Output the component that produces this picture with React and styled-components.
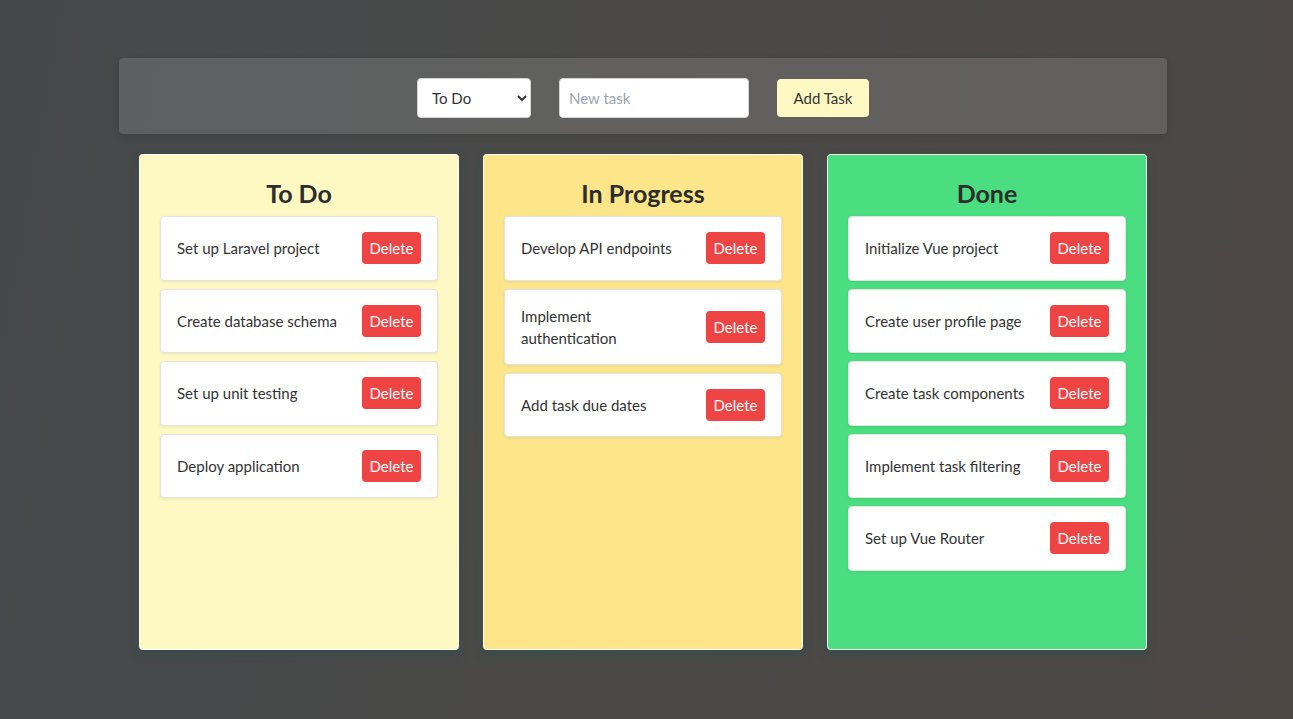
import React, { useState } from 'react';
import styled, { createGlobalStyle } from 'styled-components';

const GlobalStyle = createGlobalStyle`
	html, body {
		margin: 0;
		min-height: 100%;
	}
	body {
		min-height: 719px;
		background: linear-gradient(100deg, #45484b 0%, #4a4947 50%, #4c4743 100%);
		font-family: Lato, "Noto Sans", sans-serif;
		color: #333;
	}
	* {
		box-sizing: border-box;
	}
`;

const Page = styled.div`
	width: 1048px;
	margin-left: 119px;
	padding-top: 58px;
	padding-bottom: 60px;
`;

const Toolbar = styled.form`
	display: flex;
	justify-content: center;
	align-items: center;
	gap: 28px;
	height: 76px;
	padding: 4px 0 0;
	background: rgba(255, 255, 255, 0.13);
	border-radius: 4px;
	box-shadow: 0 2px 6px rgba(0, 0, 0, 0.12);
`;

const Select = styled.select`
	width: 114px;
	height: 40px;
	padding: 0 8px 0 10px;
	border: 1px solid #d4d4d4;
	border-radius: 4px;
	background: #fff;
	font-family: inherit;
	font-size: 15px;
	color: #333;
`;

const Input = styled.input`
	width: 190px;
	height: 40px;
	padding: 0 9px;
	border: 1px solid #d4d4d4;
	border-radius: 4px;
	font-family: inherit;
	font-size: 15px;
	color: #333;
	outline: none;

	&::placeholder {
		color: #9ca3af;
	}
`;

const AddButton = styled.button`
	width: 92px;
	height: 38px;
	border: none;
	border-radius: 4px;
	background: #fef9c3;
	font-family: inherit;
	font-size: 15px;
	color: #333;
	cursor: pointer;
`;

const Board = styled.div`
	display: grid;
	grid-template-columns: repeat(3, 320px);
	gap: 24px;
	justify-content: center;
	margin-top: 20px;
`;

const Column = styled.section`
	height: 496px;
	padding: 23px 20px 20px;
	background: ${props => props.color};
	border: 1px solid rgba(255, 255, 255, 0.9);
	border-radius: 4px;
	box-shadow: 0 4px 10px rgba(20, 90, 80, 0.35);
`;

const Title = styled.h2`
	margin: 0 0 8px;
	text-align: center;
	font-size: 25px;
	line-height: 30px;
	font-weight: 700;
	color: #2d2d2d;
`;

const TaskList = styled.div`
	display: flex;
	flex-direction: column;
	gap: 8px;
`;

const Card = styled.div`
	display: flex;
	align-items: center;
	justify-content: space-between;
	gap: 16px;
	min-height: 64.5px;
	padding: 15px 16px;
	background: #fff;
	border: 1px solid #e3e3e3;
	border-radius: 4px;
	box-shadow: 0 1px 3px rgba(0, 0, 0, 0.08);
`;

const TaskText = styled.span`
	font-size: 15px;
	line-height: 22px;
	color: #333;
`;

const DeleteButton = styled.button`
	flex-shrink: 0;
	width: 59px;
	height: 32px;
	padding: 0;
	border: none;
	border-radius: 4px;
	background: #ef4444;
	color: #fff;
	font-family: inherit;
	font-size: 15px;
	cursor: pointer;
`;

const initialColumns = [
	{
		name: 'To Do',
		color: '#fef9c3',
		tasks: ['Set up Laravel project', 'Create database schema', 'Set up unit testing', 'Deploy application'],
	},
	{
		name: 'In Progress',
		color: '#fde68a',
		tasks: ['Develop API endpoints', 'Implement authentication', 'Add task due dates'],
	},
	{
		name: 'Done',
		color: '#4ade80',
		tasks: ['Initialize Vue project', 'Create user profile page', 'Create task components', 'Implement task filtering', 'Set up Vue Router'],
	},
];

const App = () => {
	const [columns, setColumns] = useState(initialColumns);
	const [status, setStatus] = useState('To Do');
	const [text, setText] = useState('');

	const addTask = (e) => {
		e.preventDefault();
		if (!text.trim()) return;
		setColumns(columns.map(col => (
			col.name === status ? {...col, tasks: [...col.tasks, text.trim()]} : col
		)));
		setText('');
	};

	const removeTask = (name, index) => {
		setColumns(columns.map(col => (
			col.name === name ? {...col, tasks: col.tasks.filter((_, i) => i !== index)} : col
		)));
	};

	return (
		<>
			<GlobalStyle />
			<Page>
				<Toolbar onSubmit={addTask}>
					<Select value={status} onChange={e => setStatus(e.target.value)}>
						{columns.map(col => (
							<option key={col.name}>{col.name}</option>
						))}
					</Select>
					<Input
						placeholder="New task"
						value={text}
						onChange={e => setText(e.target.value)} />
					<AddButton type="submit">Add Task</AddButton>
				</Toolbar>

				<Board>
					{columns.map(col => (
						<Column key={col.name} color={col.color}>
							<Title>{col.name}</Title>
							<TaskList>
								{col.tasks.map((task, i) => (
									<Card key={task + i}>
										<TaskText>{task}</TaskText>
										<DeleteButton onClick={() => removeTask(col.name, i)}>Delete</DeleteButton>
									</Card>
								))}
							</TaskList>
						</Column>
					))}
				</Board>
			</Page>
		</>
	);
};

export default App;
